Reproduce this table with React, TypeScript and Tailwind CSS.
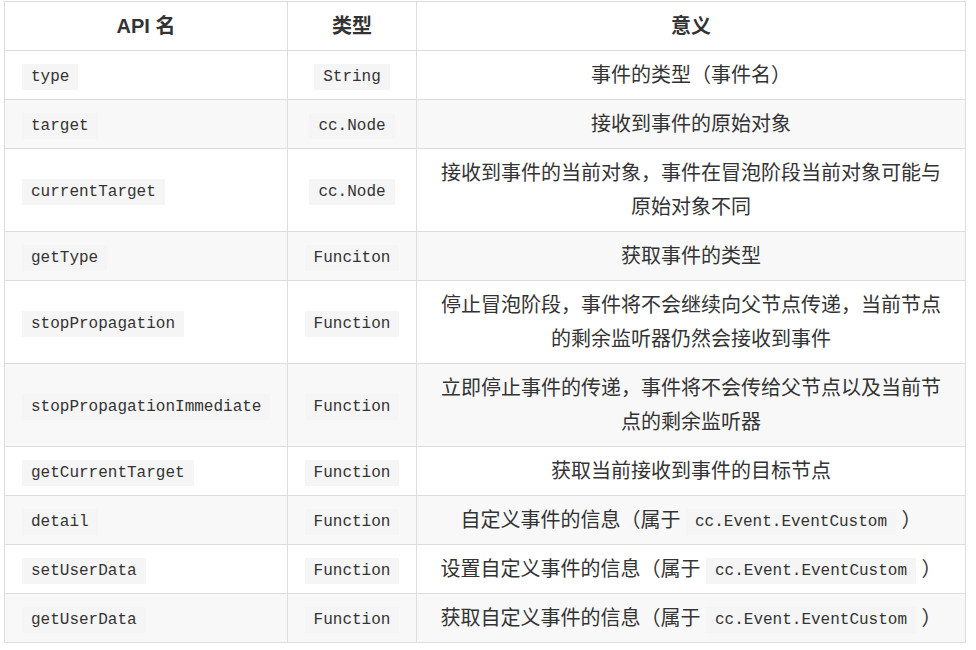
const rows: { name: string; type: string; desc: React.ReactNode }[] = [
  { name: 'type', type: 'String', desc: '事件的类型（事件名）' },
  { name: 'target', type: 'cc.Node', desc: '接收到事件的原始对象' },
  {
    name: 'currentTarget',
    type: 'cc.Node',
    desc: '接收到事件的当前对象，事件在冒泡阶段当前对象可能与原始对象不同',
  },
  { name: 'getType', type: 'Funciton', desc: '获取事件的类型' },
  {
    name: 'stopPropagation',
    type: 'Function',
    desc: '停止冒泡阶段，事件将不会继续向父节点传递，当前节点的剩余监听器仍然会接收到事件',
  },
  {
    name: 'stopPropagationImmediate',
    type: 'Function',
    desc: '立即停止事件的传递，事件将不会传给父节点以及当前节点的剩余监听器',
  },
  { name: 'getCurrentTarget', type: 'Function', desc: '获取当前接收到事件的目标节点' },
  { name: 'detail', type: 'Function', desc: 'custom:自定义事件的信息（属于' },
  { name: 'setUserData', type: 'Function', desc: 'custom:设置自定义事件的信息（属于' },
  { name: 'getUserData', type: 'Function', desc: 'custom:获取自定义事件的信息（属于' },
];

const Code = ({ children }: { children: React.ReactNode }) => (
  <code
    className="inline-block bg-[#f5f5f5] px-[9px] py-[3px] text-[16px] leading-[20px] text-[#333] align-middle"
    style={{ fontFamily: '"Liberation Mono", "DejaVu Sans Mono", monospace' }}
  >
    {children}
  </code>
);

const Desc = ({ text }: { text: string }) => {
  if (text.startsWith('custom:')) {
    return (
      <>
        {text.slice(7)} <Code>cc.Event.EventCustom</Code> ）
      </>
    );
  }
  return <>{text}</>;
};

const App = () => {
  return (
    <div
      className="bg-white pl-[4px] pt-px text-[#333]"
      style={{ fontFamily: '"Liberation Sans", "Noto Sans CJK SC", sans-serif' }}
    >
      <table className="w-[962px] border-collapse text-[20px] leading-[34px]">
        <thead>
          <tr>
            <th className="w-[283px] border border-[#ddd] py-[7px] font-bold">API 名</th>
            <th className="w-[129px] border border-[#ddd] py-[7px] font-bold">类型</th>
            <th className="border border-[#ddd] py-[7px] font-bold">意义</th>
          </tr>
        </thead>
        <tbody>
          {rows.map((r, i) => (
            <tr key={r.name} className={i % 2 === 1 ? 'bg-[#f8f8f8]' : 'bg-white'}>
              <td className="border border-[#ddd] py-[7px] pl-[17px]">
                <Code>{r.name}</Code>
              </td>
              <td className="border border-[#ddd] py-[7px] text-center">
                <Code>{r.type}</Code>
              </td>
              <td className="border border-[#ddd] px-[20px] py-[7px] text-center">
                <Desc text={r.desc as string} />
              </td>
            </tr>
          ))}
        </tbody>
      </table>
    </div>
  );
};

export default App;
